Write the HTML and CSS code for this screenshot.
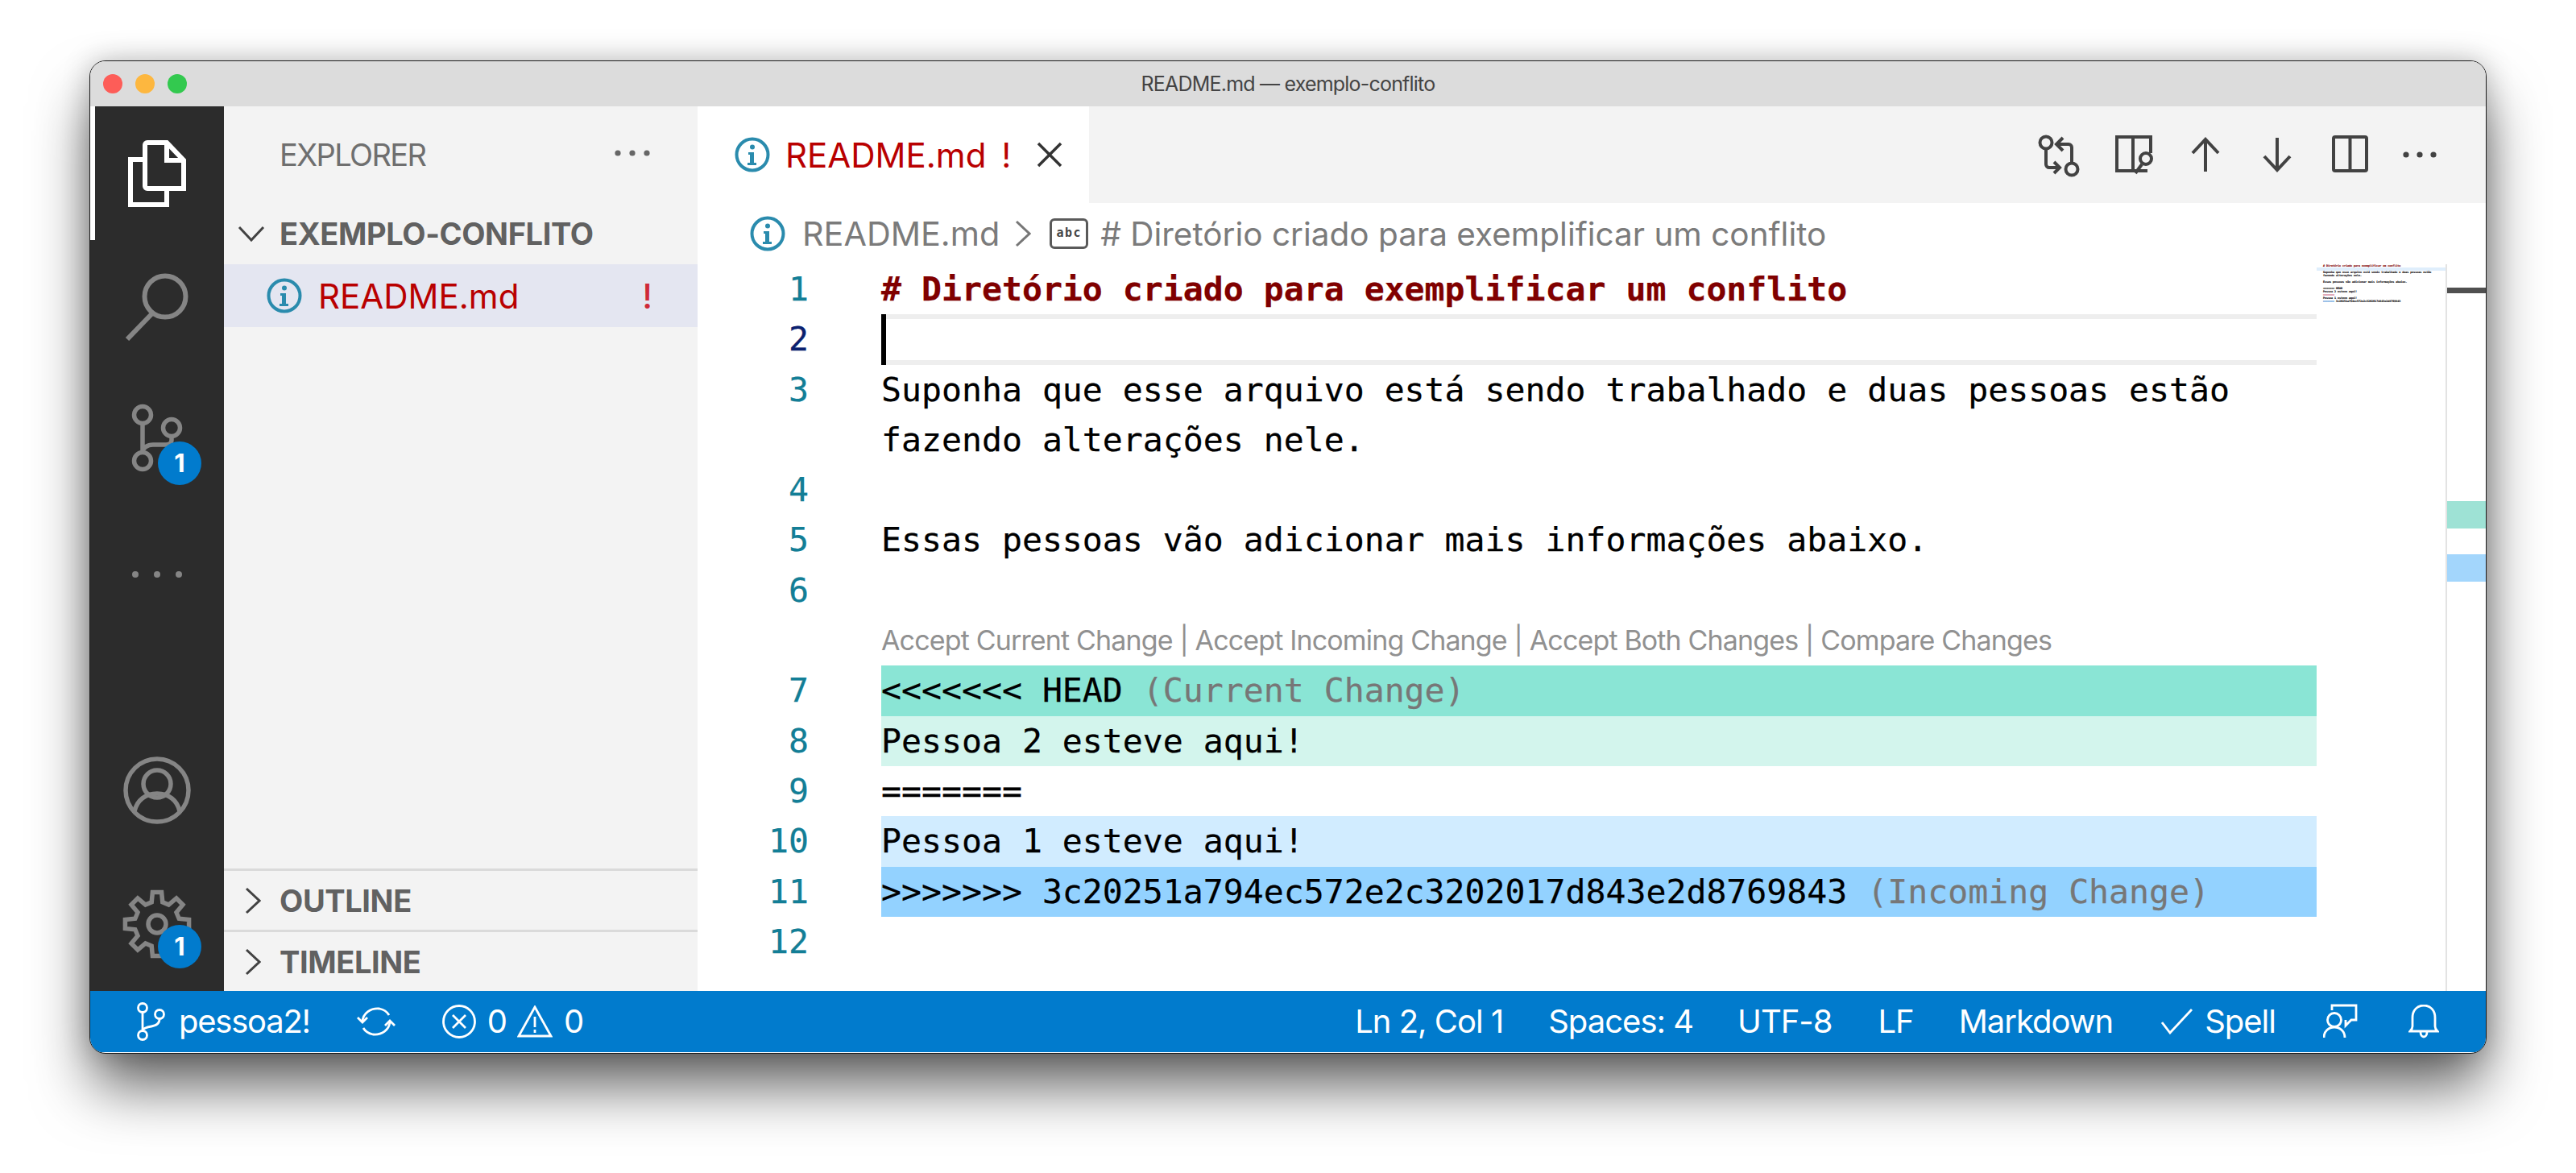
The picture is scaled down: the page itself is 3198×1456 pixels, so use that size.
FILE: index.html
```html
<!DOCTYPE html>
<html lang="pt">
<head>
<meta charset="utf-8">
<title>README.md — exemplo-conflito</title>
<link rel="stylesheet" href="styles.css">
</head>
<body>
<div class="window">
  <header class="titlebar">
    <div class="lights"><span class="light red"></span><span class="light yellow"></span><span class="light green"></span></div>
    <div class="title">README.md — exemplo-conflito</div>
    <div></div>
  </header>
  <div class="main">
    <nav class="activity">
      <div class="act-item active">
        <svg class="ic-files" viewBox="0 0 72 83"><path d="M24 3h24l21 22v35H24a3 3 0 0 1-3-3V6a3 3 0 0 1 3-3z"/><path d="M48 3v22h21"/><path d="M21 24H3v56h45V60"/></svg>
      </div>
      <div class="act-item">
        <svg class="ic-search" viewBox="0 0 80 84"><circle cx="50" cy="29" r="25.5"/><path d="M34 50L3 82"/></svg>
      </div>
      <div class="act-item">
        <svg class="ic-scm" viewBox="0 0 70 94"><circle cx="17" cy="15" r="10.500"/><circle cx="17" cy="72" r="10.500"/><circle cx="53" cy="31" r="10.500"/><path d="M17 26v35M53 42v4c0 4-3 6-7 6H30c-7 0-13 4-13 9"/></svg>
        <span class="badge">1</span>
      </div>
      <div class="act-item">
        <svg class="ic-dots" viewBox="0 0 64 10"><circle cx="5" cy="5" r="4"/><circle cx="32" cy="5" r="4"/><circle cx="59" cy="5" r="4"/></svg>
      </div>
      <div class="act-spacer"></div>
      <div class="act-item">
        <svg class="ic-account" viewBox="0 0 84 84"><circle cx="42" cy="42" r="39"/><circle cx="42" cy="34" r="17"/><path d="M14 68c3-14 14-22 28-22s25 8 28 22"/></svg>
      </div>
      <div class="act-item">
        <svg class="ic-gear" viewBox="-44 -44 88 88"><path d="M27.2-6.8L39.6-5.6V5.6L27.2 6.8L24 14.4L32 24L24 32L14.4 24L6.8 27.2L5.6 39.6H-5.6L-6.8 27.2L-14.4 24L-24 32L-32 24L-24 14.4L-27.2 6.8L-39.6 5.6V-5.6L-27.2-6.8L-24-14.4L-32-24L-24-32L-14.4-24L-6.8-27.2L-5.6-39.6H5.6L6.8-27.2L14.4-24L24-32L32-24L24-14.4Z"/><circle r="11"/></svg>
        <span class="badge">1</span>
      </div>
    </nav>

    <aside class="sidebar">
      <div class="side-head">
        <span class="side-title">EXPLORER</span>
        <svg class="more" viewBox="0 0 44 10"><circle cx="4" cy="5" r="3.6"/><circle cx="22" cy="5" r="3.6"/><circle cx="40" cy="5" r="3.6"/></svg>
      </div>
      <div class="folder-row">
        <svg class="chev-down" viewBox="0 0 34 20"><path d="M2 2l15 16L32 2"/></svg>
        <span class="section-name">EXEMPLO-CONFLITO</span>
      </div>
      <div class="file-row">
        <svg class="info" viewBox="0 0 44 44"><circle cx="22" cy="22" r="19.5"/><circle class="info-dot" cx="22" cy="12.5" r="3"/><path class="info-i" d="M17 19h7v13h3v3H16v-3h3V22h-2z"/></svg>
        <span class="file-name">README.md</span>
        <span class="file-flag">!</span>
      </div>
      <div class="side-spacer"></div>
      <div class="pane-row">
        <svg class="chev-right" viewBox="0 0 20 34"><path d="M2 2l16 15L2 32"/></svg>
        <span class="section-name">OUTLINE</span>
      </div>
      <div class="pane-row">
        <svg class="chev-right" viewBox="0 0 20 34"><path d="M2 2l16 15L2 32"/></svg>
        <span class="section-name">TIMELINE</span>
      </div>
    </aside>

    <section class="group">
      <div class="tabbar">
        <div class="tab">
          <svg class="info" viewBox="0 0 44 44"><circle cx="22" cy="22" r="19.5"/><circle class="info-dot" cx="22" cy="12.5" r="3"/><path class="info-i" d="M17 19h7v13h3v3H16v-3h3V22h-2z"/></svg>
          <span class="tab-name">README.md</span>
          <span class="tab-flag">!</span>
          <svg class="tab-close" viewBox="0 0 32 32"><path d="M2 2l28 28M30 2L2 30"/></svg>
        </div>
        <div class="actions">
          <svg class="action" viewBox="0 0 90 90"><g transform="translate(22 21)"><circle cx="9" cy="9" r="7.5"/><circle cx="41" cy="42" r="7.5"/><path d="M9 17v19a4 4 0 0 0 4 4h13M19 33l7 7-7 7M41 34V15a4 4 0 0 0-4-4H22M30 3l-8 8 8 8"/></g></svg>
          <svg class="action" viewBox="0 0 90 90"><g transform="translate(27 21)"><path d="M44 22V2H2v42h38M22 2v42"/><circle cx="38" cy="29" r="7"/><path d="M33 36l-8 11"/></g></svg>
          <svg class="action" viewBox="0 0 90 90"><g transform="translate(31 24)"><path d="M18 42V2M2 19L18 2l16 17"/></g></svg>
          <svg class="action" viewBox="0 0 90 90"><g transform="translate(30 24)"><path d="M18 0v40M2 23l16 17 16-17"/></g></svg>
          <svg class="action" viewBox="0 0 90 90"><g transform="translate(26 21)"><rect x="2" y="2" width="41" height="42" rx="2"/><path d="M22.500 2v42"/></g></svg>
          <svg class="action action-dots" viewBox="0 0 90 90"><circle cx="28" cy="45" r="3.600"/><circle cx="45" cy="45" r="3.600"/><circle cx="62" cy="45" r="3.600"/></svg>
        </div>
      </div>

      <div class="crumbs">
        <svg class="info" viewBox="0 0 44 44"><circle cx="22" cy="22" r="19.5"/><circle class="info-dot" cx="22" cy="12.5" r="3"/><path class="info-i" d="M17 19h7v13h3v3H16v-3h3V22h-2z"/></svg>
        <span class="crumb-file">README.md</span>
        <svg class="crumb-sep" viewBox="0 0 20 34"><path d="M2 2l16 15L2 32"/></svg>
        <span class="abc">abc</span>
        <span class="crumb-sym"># Diretório criado para exemplificar um conflito</span>
      </div>

      <div class="editor">
        <div class="code">
          <div class="row"><span class="num">1</span><div class="line heading"># Diretório criado para exemplificar um conflito</div></div>
          <div class="row"><span class="num current">2</span><div class="line current-line"><span class="cursor"></span></div></div>
          <div class="row"><span class="num">3</span><div class="line">Suponha que esse arquivo está sendo trabalhado e duas pessoas estão fazendo alterações nele.</div></div>
          <div class="row"><span class="num">4</span><div class="line"></div></div>
          <div class="row"><span class="num">5</span><div class="line">Essas pessoas vão adicionar mais informações abaixo.</div></div>
          <div class="row"><span class="num">6</span><div class="line"></div></div>
          <div class="row lens-row"><span class="num"></span><div class="lens">Accept Current Change | Accept Incoming Change | Accept Both Changes | Compare Changes</div></div>
          <div class="row"><span class="num">7</span><div class="line cur-head">&lt;&lt;&lt;&lt;&lt;&lt;&lt; HEAD <span class="hint">(Current Change)</span></div></div>
          <div class="row"><span class="num">8</span><div class="line cur-body">Pessoa 2 esteve aqui!</div></div>
          <div class="row"><span class="num">9</span><div class="line">=======</div></div>
          <div class="row"><span class="num">10</span><div class="line inc-body">Pessoa 1 esteve aqui!</div></div>
          <div class="row"><span class="num">11</span><div class="line inc-head">&gt;&gt;&gt;&gt;&gt;&gt;&gt; 3c20251a794ec572e2c3202017d843e2d8769843 <span class="hint">(Incoming Change)</span></div></div>
          <div class="row"><span class="num">12</span><div class="line"></div></div>
        </div>
        <div class="minimap">
          <div class="mini-line mini-head"># Diretório criado para exemplificar um conflito</div>
          <div class="mini-line mini-cur"></div>
          <div class="mini-line">Suponha que esse arquivo está sendo trabalhado e duas pessoas estão</div>
          <div class="mini-line">fazendo alterações nele.</div>
          <div class="mini-line"></div>
          <div class="mini-line">Essas pessoas vão adicionar mais informações abaixo.</div>
          <div class="mini-line"></div>
          <div class="mini-line">&lt;&lt;&lt;&lt;&lt;&lt;&lt; HEAD</div>
          <div class="mini-line">Pessoa 2 esteve aqui!</div>
          <div class="mini-line mini-sep">=======</div>
          <div class="mini-line">Pessoa 1 esteve aqui!</div>
          <div class="mini-line"><span class="mini-inc">&gt;&gt;&gt;&gt;&gt;&gt;&gt;</span> 3c20251a794ec572e2c3202017d843e2d8769843</div>
        </div>
        <div class="ruler">
          <span class="mark mark-cursor"></span>
          <span class="mark mark-cur"></span>
          <span class="mark mark-inc"></span>
        </div>
      </div>
    </section>
  </div>

  <footer class="statusbar">
    <div class="st-left">
      <svg class="st-branch" viewBox="0 0 36 48"><circle cx="7" cy="7" r="5.500"/><circle cx="7" cy="41" r="5.500"/><circle cx="28" cy="15" r="5.500"/><path d="M7 13v22M28 21c0 6-4 8-10 9-6 1-10 2-11 5"/></svg>
      <span class="st-text branch-name">pessoa2!</span>
      <svg class="st-sync" viewBox="0 0 48 38"><path d="M7 20C7 8 18 2 28 3c5 1 9 3 12 8M41 18c0 12-11 18-21 17-5-1-9-3-12-8"/><path d="M1 14l6 6 6-6M35 24l6-6 6 6"/></svg>
      <svg class="st-error" viewBox="0 0 42 42"><circle cx="21" cy="21" r="19.500"/><path d="M13 13l16 16M29 13L13 29"/></svg>
      <span class="st-text st-count">0</span>
      <svg class="st-warn" viewBox="0 0 44 40"><path d="M22 2L42 38H2z"/><path d="M22 14v13M22 30v4"/></svg>
      <span class="st-text st-count">0</span>
    </div>
    <div class="st-right">
      <span class="st-text st-ln">Ln 2, Col 1</span>
      <span class="st-text st-sp">Spaces: 4</span>
      <span class="st-text st-enc">UTF-8</span>
      <span class="st-text st-lf">LF</span>
      <span class="st-text st-lang">Markdown</span>
      <svg class="st-check" viewBox="0 0 40 32"><path d="M1 17l10 13L38 1"/></svg>
      <span class="st-text st-spell">Spell</span>
      <svg class="st-feedback" viewBox="0 0 44 44"><circle cx="14" cy="20" r="8.500"/><path d="M1 42c0-8 6-13 13-13s13 5 13 13M11 8V2H41V20H35L28 27V20"/></svg>
      <svg class="st-bell" viewBox="0 0 38 42"><path d="M2 33c1-1 3-3 3-6V16C5 7 11 1 19 1s14 6 14 15v11c0 3 2 5 3 6z"/><path d="M15 34c0 4 2 6 4 6s4-2 4-6"/></svg>
    </div>
  </footer>
</div>
</body>
</html>
```
FILE: styles.css
```css
* { box-sizing: border-box; }
html, body { margin: 0; height: 100%; background: #fff; overflow: hidden; }
body { padding: 75px 0 0 111px; font-family: Inter, "Liberation Sans", sans-serif; }
svg { display: block; fill: none; flex: none; }

.window {
  width: 2976px; height: 1233px;
  display: flex; flex-direction: column;
  background: #fff;
  border: 1px solid #1c1c1c;
  border-radius: 20px;
  overflow: hidden;
  box-shadow: 0 44px 72px -4px rgba(0,0,0,.62), 0 0 34px rgba(0,0,0,.22);
}

.titlebar { height: 56px; flex: none; background: #dcdcdc; display: grid; grid-template-columns: 1fr auto 1fr; align-items: center; }
.lights { display: flex; gap: 16px; padding-left: 16px; }
.light { width: 24px; height: 24px; border-radius: 50%; }
.red { background: #fd5d58; }
.yellow { background: #fdb73f; }
.green { background: #33c94f; }
.title { font-size: 25px; letter-spacing: -.8px; color: #444; }

.main { flex: 1; min-height: 0; display: flex; }

.activity { width: 166px; flex: none; background: #2c2c2c; display: flex; flex-direction: column; }
.act-item { position: relative; height: 166px; flex: none; display: flex; align-items: center; justify-content: center; }
.act-item.active::before { content: ""; position: absolute; left: 0; top: 0; bottom: 0; width: 6px; background: #fff; }
.act-spacer { flex: 1; }
.ic-files { width: 72px; height: 83px; stroke: #fff; stroke-width: 6; }
.ic-search { width: 80px; height: 84px; stroke: #858585; stroke-width: 6; }
.ic-scm { width: 70px; height: 94px; stroke: #858585; stroke-width: 5.5; }
.ic-dots { width: 64px; height: 10px; fill: #858585; }
.ic-account { width: 84px; height: 84px; stroke: #858585; stroke-width: 5.5; }
.ic-gear { width: 88px; height: 88px; stroke: #858585; stroke-width: 5.5; }
.badge {
  position: absolute; left: 84px; top: 84px;
  width: 54px; height: 54px; border-radius: 50%;
  background: #017bcd; color: #fff;
  font-size: 31px; font-weight: 700; line-height: 54px; text-align: center;
}

.sidebar { width: 588px; flex: none; background: #f3f3f3; display: flex; flex-direction: column; }
.side-head { height: 120px; flex: none; display: flex; align-items: center; padding-left: 69px; }
.side-title { font-size: 38px; letter-spacing: -1.6px; color: #6f6f6f; }
.more { width: 44px; height: 10px; fill: #666; margin-left: auto; margin-right: 59px; margin-top: -4px; }
.folder-row { height: 76px; flex: none; display: flex; align-items: center; padding-left: 17px; gap: 18px; }
.chev-down { width: 34px; height: 20px; stroke: #424242; stroke-width: 3; }
.section-name { font-size: 38px; font-weight: 700; letter-spacing: -.4px; color: #616161; }
.file-row { height: 78px; flex: none; background: #e4e6f1; display: flex; align-items: center; padding-left: 53px; }
.info { width: 44px; height: 44px; stroke: #2a8bad; stroke-width: 4; }
.info-dot { fill: #2a8bad; stroke: none; }
.info-i { fill: #2a8bad; stroke: none; }
.file-name { font-size: 42px; color: #b90000; margin-left: 20px; }
.file-flag { font-size: 42px; font-weight: 500; color: #cf2a38; margin-left: auto; margin-right: 56px; }
.side-spacer { flex: 1; }
.pane-row { height: 76px; flex: none; border-top: 3px solid #dadada; display: flex; align-items: center; padding-left: 26px; gap: 23px; }
.chev-right { width: 20px; height: 34px; stroke: #424242; stroke-width: 3; }

.group { flex: 1; min-width: 0; display: flex; flex-direction: column; background: #fff; }
.tabbar { height: 120px; flex: none; background: #f3f3f3; display: flex; align-items: stretch; }
.tab { width: 486px; background: #fff; display: flex; align-items: center; padding-left: 46px; }
.tab-name { font-size: 42px; color: #b90000; margin-left: 19px; }
.tab-flag { font-size: 42px; color: #b90000; margin-left: 19px; }
.tab-close { width: 32px; height: 32px; stroke: #333; stroke-width: 3.500; margin-left: 32px; }
.actions { margin-left: auto; display: flex; align-items: center; padding-right: 37px; }
.action { width: 90px; height: 90px; stroke: #424242; stroke-width: 4; }
.action-dots { stroke: none; fill: #424242; }

.crumbs { height: 76px; flex: none; display: flex; align-items: center; padding-left: 65px; color: #7b7b7b; font-size: 40.500px; }
.crumb-file { font-size: 41.300px; margin-left: 21px; }
.crumb-sep { width: 20px; height: 34px; stroke: #777; stroke-width: 3; margin-left: 19px; }
.abc { width: 48px; height: 38px; margin-left: 23px; border: 3px solid #5a5a5a; border-radius: 6px; color: #444; font-family: "DejaVu Sans Mono", monospace; font-size: 15px; letter-spacing: 1.500px; font-weight: 700; line-height: 31px; text-align: center; }
.crumb-sym { margin-left: 15px; }

.editor { flex: 1; min-height: 0; display: flex; }
.code { width: 2010px; flex: none; font-family: "DejaVu Sans Mono", monospace; font-size: 41.5px; line-height: 62.3px; color: #000; -webkit-text-stroke: .25px currentColor; }
.row { display: flex; }
.num { width: 138px; flex: none; text-align: right; color: #137e96; }
.num.current { color: #0b216f; }
.line { width: 1782px; margin-left: 90px; min-height: 62.3px; white-space: pre-wrap; position: relative; }
.heading { color: #800000; font-weight: 700; }
.current-line { border-top: 6px solid #eeeeee; border-bottom: 6px solid #eeeeee; }
.cursor { position: absolute; left: 0; top: -6px; bottom: -6px; width: 6px; background: #000; }
.lens { width: 1782px; margin-left: 90px; font-family: Inter, "Liberation Sans", sans-serif; font-size: 34px; letter-spacing: -.85px; color: #919191; white-space: nowrap; -webkit-text-stroke: 0; }
.cur-head { background: #8ae5d5; }
.cur-body { background: #d3f5ed; }
.inc-body { background: #d1ecff; }
.inc-head { background: #93d2ff; }
.hint { color: #777; }

.minimap { width: 160px; flex: none; padding-left: 8px; font-family: "DejaVu Sans Mono", monospace; font-size: 3.33px; font-weight: 700; line-height: 4px; color: #111; white-space: nowrap; overflow: hidden; -webkit-text-stroke: .15px currentColor; }
.mini-line { height: 4px; }
.mini-head { color: #800000; }
.mini-cur { background: #dfeefc; margin-left: -8px; }
.mini-sep { color: #c2305a; }
.mini-inc { color: #4a90d9; }
.ruler { flex: 1; position: relative; border-left: 2px solid #e3e3e3; }
.mark { position: absolute; left: 0; right: 0; display: block; }
.mark-cursor { top: 29px; height: 7px; background: #505050; }
.mark-cur { top: 294px; height: 34px; background: #9ee2d5; }
.mark-inc { top: 360px; height: 34px; background: #a3d6fc; }

.statusbar { height: 76px; flex: none; margin-bottom: 1px; background: #017bcd; color: #fff; display: flex; align-items: center; justify-content: space-between; }
.st-left, .st-right { display: flex; align-items: center; }
.st-text { font-size: 40px; letter-spacing: -1px; line-height: 76px; }
.statusbar svg { stroke: #fff; stroke-width: 2.800; }
.st-branch { width: 36px; height: 48px; margin-left: 58px; }
.branch-name { margin-left: 16px; letter-spacing: -1.250px; }
.st-sync { width: 48px; height: 38px; margin-left: 58px; }
.st-error { width: 42px; height: 42px; margin-left: 58px; }
.st-count { margin-left: 14px; }
.st-warn { width: 44px; height: 40px; margin-left: 13px; }
.st-sp { margin-left: 56px; }
.st-enc { margin-left: 55px; }
.st-lf { margin-left: 57px; }
.st-lang { margin-left: 56px; }
.st-check { width: 40px; height: 32px; margin-left: 60px; }
.st-spell { margin-left: 14px; }
.st-feedback { width: 44px; height: 44px; margin-left: 59px; }
.st-bell { width: 38px; height: 42px; margin-left: 62px; margin-right: 58px; }
```
